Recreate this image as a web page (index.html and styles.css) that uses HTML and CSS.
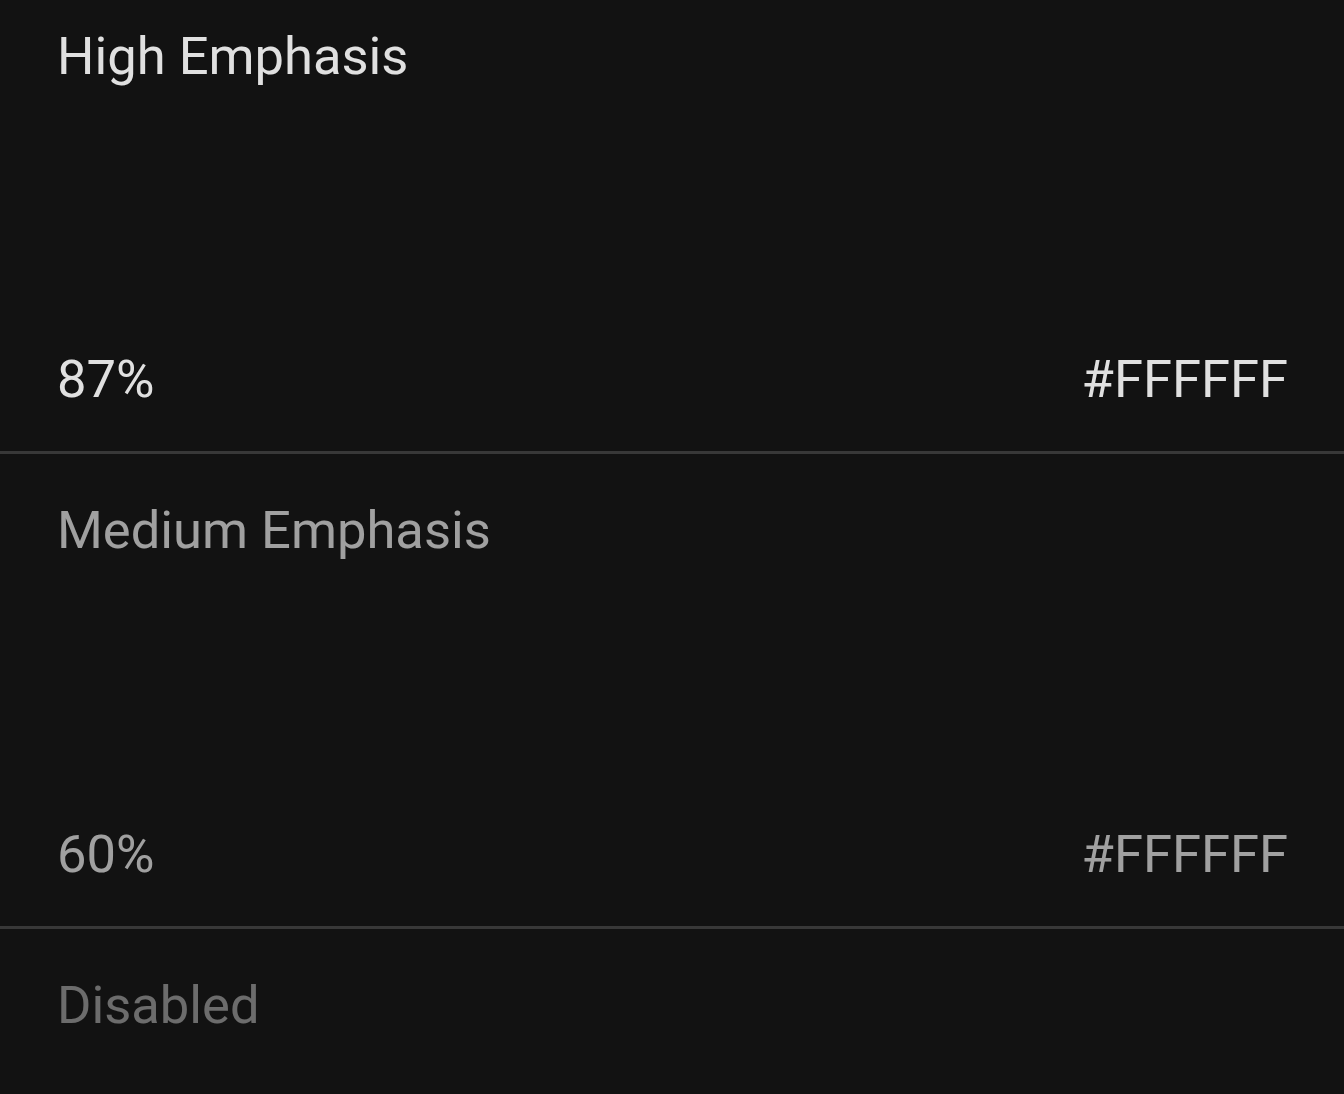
FILE: index.html
```html
<!DOCTYPE html>
<html lang="en">
<head>
<meta charset="utf-8">
<title>Text emphasis</title>
<link rel="stylesheet" href="styles.css">
</head>
<body>
<main class="list">
  <section class="item item-first high">
    <div class="title">High Emphasis</div>
    <div class="meta"><span>87%</span><span>#FFFFFF</span></div>
  </section>
  <section class="item medium">
    <div class="title">Medium Emphasis</div>
    <div class="meta"><span>60%</span><span>#FFFFFF</span></div>
  </section>
  <section class="item item-last disabled">
    <div class="title">Disabled</div>
  </section>
</main>
</body>
</html>
```
FILE: styles.css
```css
html, body {
  margin: 0;
  padding: 0;
  background: #121212;
}
body {
  font-family: Roboto, "Noto Sans", sans-serif;
  font-size: 52.5px;
  line-height: 64px;
}
.list {
  display: flex;
  flex-direction: column;
}
.item {
  box-sizing: border-box;
  height: 475px;
  padding: 44px 56px 40px 57px;
  display: flex;
  flex-direction: column;
  justify-content: space-between;
  border-bottom: 3px solid #383838;
}
.item-first {
  height: 454px;
  padding-top: 24px;
}
.item-last {
  height: auto;
  border-bottom: none;
}
.meta {
  display: flex;
  justify-content: space-between;
}
.high { color: rgba(255, 255, 255, 0.87); }
.medium { color: rgba(255, 255, 255, 0.6); }
.disabled { color: rgba(255, 255, 255, 0.38); }
```
